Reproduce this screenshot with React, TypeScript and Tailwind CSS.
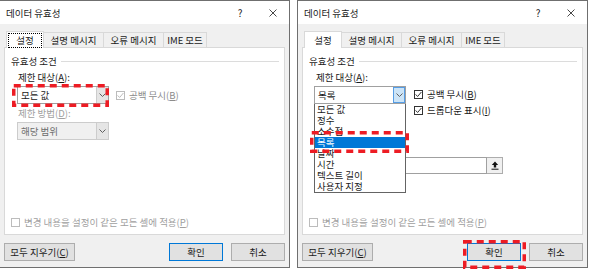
import type { ReactNode } from 'react';

function Chevron({ color = '#606060' }: { color?: string }) {
  return (
    <svg width="7" height="4" viewBox="0 0 7 4">
      <path d="M0.5 0.5 L3.5 3.5 L6.5 0.5" fill="none" stroke={color} strokeWidth="1" />
    </svg>
  );
}

function Check({ checked, disabled }: { checked?: boolean; disabled?: boolean }) {
  const c = disabled ? '#bcbcbc' : '#333333';
  return (
    <span
      className={`flex h-[9px] w-[9px] shrink-0 items-center justify-center border bg-white ${
        disabled ? 'border-[#bcbcbc]' : 'border-[#333333]'
      }`}
    >
      {checked && (
        <svg width="7" height="7" viewBox="0 0 7 7">
          <path d="M0.6 3.4 L2.6 5.5 L6.4 1" fill="none" stroke={c} strokeWidth="1" />
        </svg>
      )}
    </span>
  );
}

function Combo({ text, disabled, open, className = '' }: { text: string; disabled?: boolean; open?: boolean; className?: string }) {
  return (
    <div
      className={`flex h-[18px] w-[92px] shrink-0 border ${
        disabled ? 'border-[#cccccc] bg-[#f0f0f0] text-[#6d6d6d]' : 'border-[#a0a0a0] bg-white'
      } ${className}`}
    >
      <div className="flex-1 pl-[3px] leading-[16px]">{text}</div>
      <div
        className={`flex w-[12px] items-center justify-center ${
          open ? 'border border-[#569de5] bg-[#cce4f7]' : 'border-l border-[#cccccc] bg-[#e5e5e5]'
        }`}
      >
        <Chevron />
      </div>
    </div>
  );
}

function RedBox({ className, w, h }: { className: string; w: number; h: number }) {
  return (
    <svg className={`pointer-events-none absolute z-30 ${className}`} width={w} height={h}>
      <rect
        x="1.75"
        y="1.75"
        width={w - 3.5}
        height={h - 3.5}
        fill="none"
        stroke="#ed1c24"
        strokeWidth="3.5"
        strokeDasharray="7 5"
      />
    </svg>
  );
}

function GroupLabel() {
  return (
    <div className="flex h-[12px] items-center gap-[4px] leading-[12px]">
      <span>유효성 조건</span>
      <span className="h-px flex-1 bg-[#dcdcdc]" />
    </div>
  );
}

function CheckRow({ checked, disabled, className = '', children }: { checked?: boolean; disabled?: boolean; className?: string; children: ReactNode }) {
  return (
    <label className={`flex h-[12px] items-center gap-[4px] leading-[12px] ${className}`}>
      <Check checked={checked} disabled={disabled} />
      <span>{children}</span>
    </label>
  );
}

function Dialog({
  focusTab,
  children,
  overlay,
  className = '',
}: {
  focusTab?: boolean;
  children: ReactNode;
  overlay?: ReactNode;
  className?: string;
}) {
  const tab = 'mt-px flex h-[15px] items-center justify-center border border-b-0 border-l-0 border-[#d9d9d9] bg-[#f0f0f0]';
  return (
    <div className={`relative flex h-[268px] shrink-0 flex-col border-y border-[#6f6f6f] ${className}`}>
      {/* Title bar */}
      <div className="flex h-[23px] items-center bg-white pl-[6px] leading-[12px]">
        <span>데이터 유효성</span>
        <span className="ml-auto w-[12px] text-center text-[10px]">?</span>
        <svg className="ml-[23px] mr-[12px]" width="8" height="8" viewBox="0 0 8 8">
          <path d="M0.5 0.5 L7.5 7.5 M7.5 0.5 L0.5 7.5" stroke="#333" strokeWidth="0.9" />
        </svg>
      </div>

      <div className="flex flex-1 flex-col bg-[#f0f0f0] px-[4px] pt-[7px]">
        {/* Tabs */}
        <div className="relative z-10 -mb-px flex h-[17px] items-start pl-[2px] leading-[12px]">
          <div className="relative flex h-[17px] w-[38px] items-center justify-center border border-b-0 border-[#d9d9d9] bg-white">
            설정
            {focusTab && <span className="absolute inset-x-[1px] top-[1px] bottom-0 border border-dotted border-black" />}
          </div>
          <div className={`${tab} w-[60px]`}>설명 메시지</div>
          <div className={`${tab} w-[60px]`}>오류 메시지</div>
          <div className={`${tab} w-[43px]`}>IME 모드</div>
        </div>

        {/* Panel */}
        <div className="flex h-[188px] flex-col border border-[#d9d9d9] bg-white pb-[6px] pl-[6px] pr-[5px] pt-[7px]">
          {children}
        </div>

        {/* Buttons */}
        <div className="mt-[8px] flex items-center justify-between leading-[16px]">
          <button className="h-[18px] w-[71px] border border-[#adadad] bg-[#e1e1e1]">
            모두 지우기(<u>C</u>)
          </button>
          <div className="flex gap-[8px]">
            <button className="h-[18px] w-[54px] border border-[#0078d7] bg-[#e1e1e1]">확인</button>
            <button className="h-[18px] w-[54px] border border-[#adadad] bg-[#e1e1e1]">취소</button>
          </div>
        </div>
      </div>
      {overlay}
    </div>
  );
}

const listItems = ['모든 값', '정수', '소수점', '목록', '날짜', '시간', '텍스트 길이', '사용자 지정'];

export default function App() {
  return (
    <div className="flex h-[270px] w-[590px] items-start overflow-hidden bg-white font-['Noto_Sans_CJK_KR','Noto_Sans',sans-serif] text-[9.5px] text-[#1a1a1a]">
      {/* Left dialog */}
      <Dialog
        focusTab
        className="w-[290px] border-r"
        overlay={<RedBox className="left-[12px] top-[83px]" w={97} h={23} />}
      >
        <GroupLabel />
        <div className="ml-[7px] mt-[4px] h-[12px] leading-[12px]">
          제한 대상(<u>A</u>):
        </div>
        <div className="ml-[6px] mt-[3px] flex items-start">
          <Combo text="모든 값" />
          <CheckRow checked disabled className="ml-[7px] mt-[3px] text-[#8c8c8c]">
            공백 무시(<u>B</u>)
          </CheckRow>
        </div>
        <div className="ml-[7px] mt-[3px] h-[12px] leading-[12px] text-[#a0a0a0]">
          제한 방법(<u>D</u>):
        </div>
        <div className="ml-[6px] mt-[3px]">
          <Combo text="해당 범위" disabled className="h-[17px]" />
        </div>
        <CheckRow disabled className="mt-auto text-[#a0a0a0]">
          변경 내용을 설정이 같은 모든 셀에 적용(<u>P</u>)
        </CheckRow>
      </Dialog>

      {/* Right dialog */}
      <Dialog
        className="ml-[7px] w-[291px] border-x"
        overlay={
          <>
            <div className="absolute left-[16px] top-[103px] z-20 flex h-[89px] w-[92px] flex-col border border-t-0 border-[#646464] bg-white leading-[11px]">
              {listItems.map((item) => (
                <div
                  key={item}
                  className={`h-[11px] pl-[2px] ${item === '목록' ? 'bg-[#0078d7] text-white' : ''}`}
                >
                  {item}
                </div>
              ))}
            </div>
            <RedBox className="left-[12px] top-[130px]" w={99} h={22} />
            <RedBox className="left-[165px] top-[239px]" w={63} h={29} />
          </>
        }
      >
        <GroupLabel />
        <div className="ml-[7px] mt-[4px] h-[12px] leading-[12px]">
          제한 대상(<u>A</u>):
        </div>
        <div className="ml-[5px] mt-[3px] flex items-start">
          <Combo text="목록" open />
          <div className="ml-[8px] mt-[2px] flex flex-col gap-[4px]">
            <CheckRow checked>
              공백 무시(<u>B</u>)
            </CheckRow>
            <CheckRow checked>
              드롭다운 표시(<u>I</u>)
            </CheckRow>
          </div>
        </div>
        <div className="ml-[7px] mt-[24px] h-[12px] leading-[12px]">
          원본(<u>S</u>):
        </div>
        <div className="ml-[5px] mt-[5px] flex h-[17px]">
          <div className="w-[173px] border border-[#a0a0a0] bg-white" />
          <button className="flex w-[16px] items-center justify-center border border-l-0 border-[#adadad] bg-[#f0f0f0]">
            <svg width="8" height="9" viewBox="0 0 8 9">
              <path d="M4 0.5 L0.8 4 H2.8 V6.5 H5.2 V4 H7.2 Z" fill="#111" />
              <path d="M0.5 8.2 H7.5" stroke="#111" strokeWidth="1" />
            </svg>
          </button>
        </div>
        <CheckRow disabled className="mt-auto text-[#a0a0a0]">
          변경 내용을 설정이 같은 모든 셀에 적용(<u>P</u>)
        </CheckRow>
      </Dialog>
    </div>
  );
}
